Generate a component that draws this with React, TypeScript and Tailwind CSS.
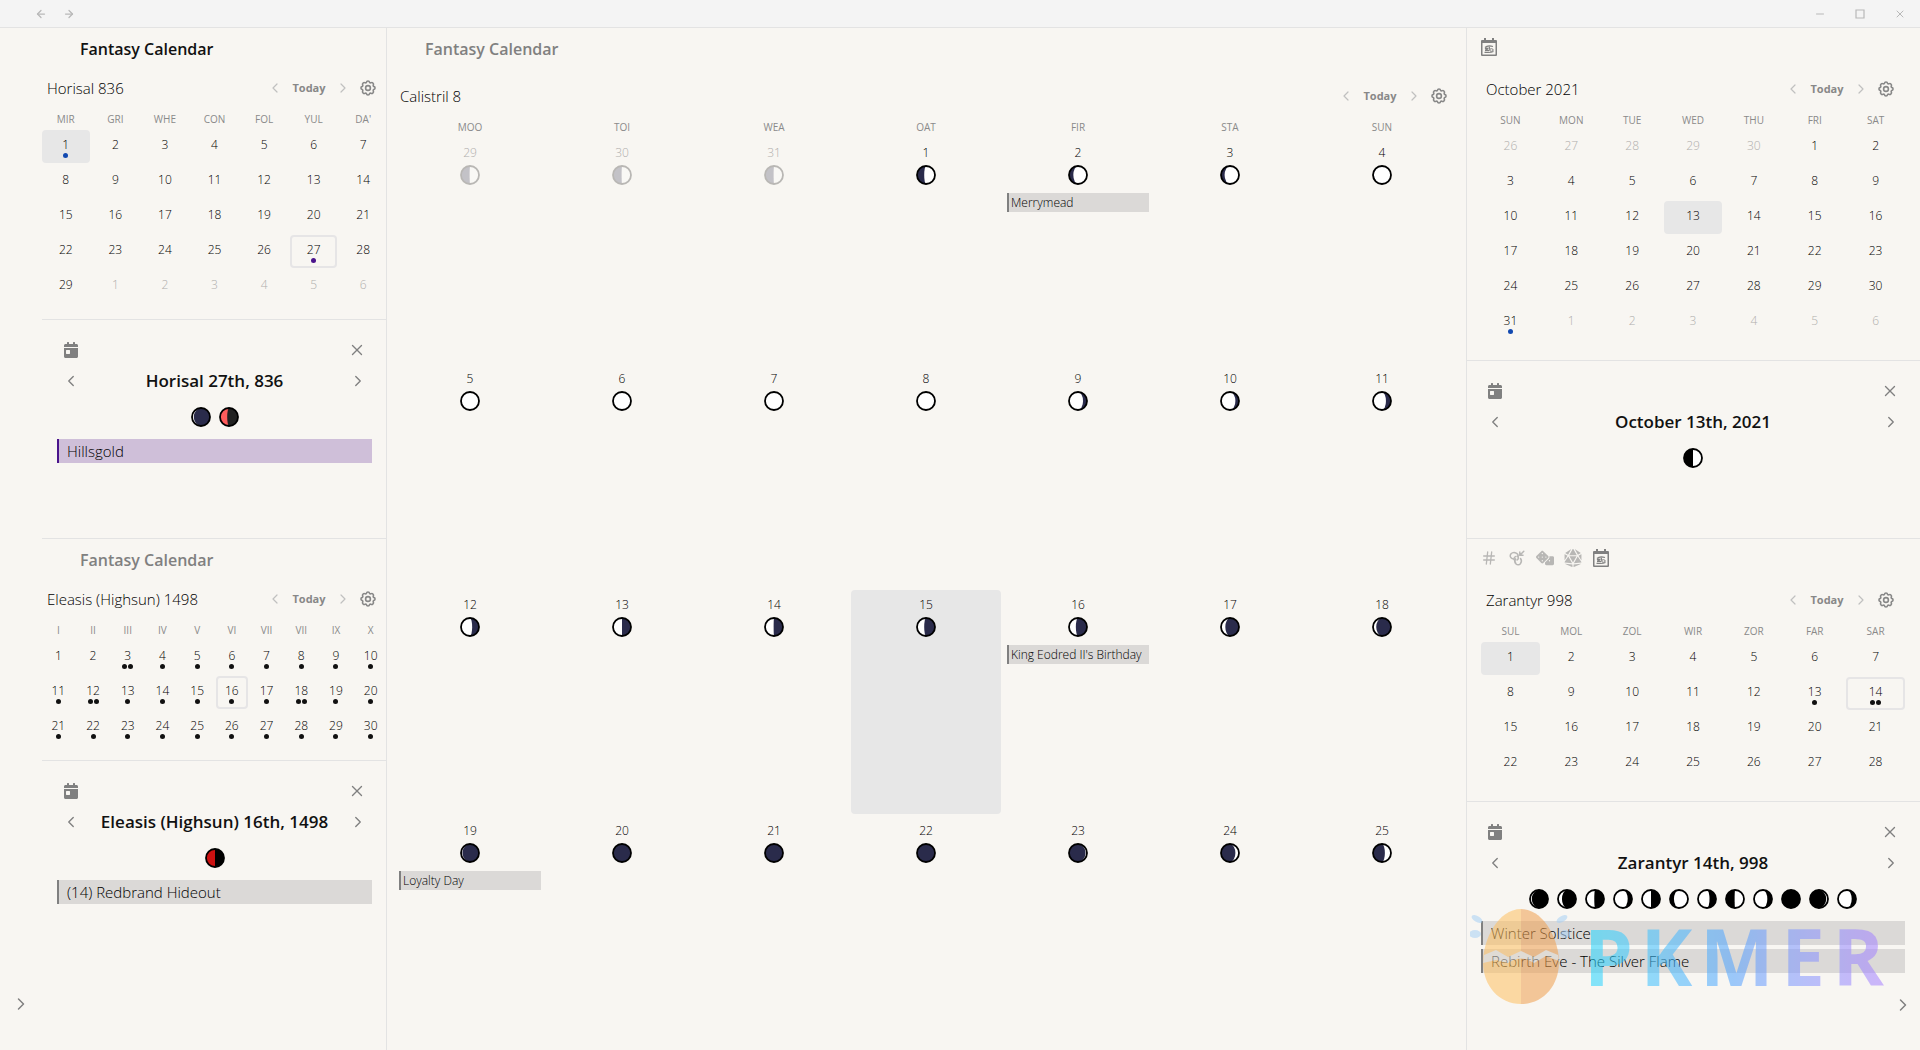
import { ArrowLeft, ArrowRight, ChevronLeft, ChevronRight, Hash, Minus, X } from 'lucide-react';
import { FaCalendarDay, FaDice, FaDiceD20 } from 'react-icons/fa';
import clsx from 'clsx';

type MoonPhase = {
    lit: 'left' | 'right';
    amount: number;
    dark?: string;
    light?: string;
};

type Day = {
    label: number;
    adjacent?: boolean;
    current?: boolean;
    selected?: boolean;
    dots?: string[];
    moon?: MoonPhase;
    event?: string;
};

type DayEvent = {
    name: string;
    tone?: 'gray' | 'purple';
};

const NIGHT = '#2a2b4b';
const INK = '#111111';
const BLUE = '#1249b0';
const PURPLE = '#4a148c';

function range(from: number, to: number): Day[] {
    return Array.from({ length: to - from + 1 }, (_, i) => ({ label: from + i }));
}

function adjacent(from: number, to: number): Day[] {
    return range(from, to).map((day) => ({ ...day, adjacent: true }));
}

function patch(days: Day[], changes: Record<number, Partial<Day>>): Day[] {
    return days.map((day) => (day.adjacent ? day : { ...day, ...changes[day.label] }));
}

const horisal = [
    ...patch(range(1, 29), {
        1: { current: true, dots: [BLUE] },
        27: { selected: true, dots: [PURPLE] },
    }),
    ...adjacent(1, 6),
];

const eleasis = range(1, 30).map((day) => ({
    ...day,
    selected: day.label === 16,
    dots: day.label < 3 ? [] : [3, 12, 18].includes(day.label) ? [INK, INK] : [INK],
}));

const october = [
    ...adjacent(26, 30),
    ...patch(range(1, 31), {
        13: { current: true },
        31: { dots: [BLUE] },
    }),
    ...adjacent(1, 6),
];

const zarantyr = patch(range(1, 28), {
    1: { current: true },
    13: { dots: [INK] },
    14: { selected: true, dots: [INK, INK] },
});

// Positive values are lit from the right, negative ones from the left.
const calistrilLight = [
    0.6, 0.76, 0.8, 0.95, 0.98, 1, 1, -0.97, -0.78, -0.8, -0.72, -0.62, -0.5, -0.48, -0.4, -0.38,
    -0.24, -0.18, -0.08, 0, 0, 0, 0.08, 0.2, 0.34,
];

const calistrilEvents: Record<number, string> = {
    2: 'Merrymead',
    16: "King Eodred II's Birthday",
    19: 'Loyalty Day',
};

const calistril: Day[] = [
    ...adjacent(29, 31).map((day) => ({
        ...day,
        moon: { lit: 'right' as const, amount: 0.52, dark: NIGHT },
    })),
    ...range(1, 25).map((day, i) => ({
        ...day,
        current: day.label === 15,
        event: calistrilEvents[day.label],
        moon: {
            lit: calistrilLight[i] < 0 ? ('left' as const) : ('right' as const),
            amount: Math.abs(calistrilLight[i]),
            dark: NIGHT,
        },
    })),
];

const zarantyrMoons: MoonPhase[] = [
    { lit: 'left', amount: 0.1 },
    { lit: 'left', amount: 0.22 },
    { lit: 'left', amount: 0.46 },
    { lit: 'left', amount: 0.76 },
    { lit: 'left', amount: 0.5 },
    { lit: 'right', amount: 0.78 },
    { lit: 'left', amount: 0.64 },
    { lit: 'right', amount: 0.52 },
    { lit: 'left', amount: 0.74 },
    { lit: 'left', amount: 0 },
    { lit: 'right', amount: 0.1 },
    { lit: 'left', amount: 0.76 },
];

function Moon({ lit, amount, dark = '#000000', light = '#ffffff' }: MoonPhase) {
    const rx = Math.abs(1 - 2 * amount) * 9;
    const outer = lit === 'left' ? 0 : 1;
    const inner = amount > 0.5 ? outer : 1 - outer;

    return (
        <svg viewBox="0 0 20 20" className="size-5" aria-hidden="true">
            <circle cx="10" cy="10" r="9" fill={dark} />
            <path
                d={`M10 1 A9 9 0 0 ${outer} 10 19 A${rx} 9 0 0 ${inner} 10 1Z`}
                fill={light}
            />
            <circle cx="10" cy="10" r="9" fill="none" stroke="#000000" strokeWidth="1.8" />
        </svg>
    );
}

function GearIcon() {
    return (
        <svg
            viewBox="0 0 24 24"
            className="size-4"
            fill="none"
            stroke="currentColor"
            strokeWidth="2.4"
            strokeLinejoin="round"
            aria-hidden="true"
        >
            <path d="M9.6 3.6Q10 1.4 12 1.4Q14 1.4 14.4 3.6Q15 4.4 16.2 4.2Q18 3 19.4 4.6Q21 6 19.8 7.8Q19.6 9 20.4 9.6Q22.6 10 22.6 12Q22.6 14 20.4 14.4Q19.6 15 19.8 16.2Q21 18 19.4 19.4Q18 21 16.2 19.8Q15 19.6 14.4 20.4Q14 22.6 12 22.6Q10 22.6 9.6 20.4Q9 19.6 7.8 19.8Q6 21 4.6 19.4Q3 18 4.2 16.2Q4.4 15 3.6 14.4Q1.4 14 1.4 12Q1.4 10 3.6 9.6Q4.4 9 4.2 7.8Q3 6 4.6 4.6Q6 3 7.8 4.2Q9 4.4 9.6 3.6Z" />
            <circle cx="12" cy="12" r="3.6" />
        </svg>
    );
}

function FantasyCalendarIcon() {
    return (
        <svg viewBox="0 0 16 18" className="h-[18px] w-4" aria-hidden="true">
            <path
                fill="currentColor"
                fillRule="evenodd"
                d="M3 0h2v2h6V0h2v2h2a1 1 0 0 1 1 1v14a1 1 0 0 1-1 1H1a1 1 0 0 1-1-1V3a1 1 0 0 1 1-1h2zM1.5 5v11.500h13V5z"
            />
            <path
                fill="none"
                stroke="currentColor"
                strokeWidth="1.2"
                d="M4 9.500c2-2 5-2 8-1M3.500 14.300c4 .4 7 .2 9-.8"
            />
            <ellipse cx="5.600" cy="10.800" rx="1.800" ry="1.200" fill="currentColor" />
            <ellipse cx="10.400" cy="12" rx="1.800" ry="1.300" fill="none" stroke="currentColor" />
            <path stroke="currentColor" strokeWidth="1.3" d="M8.300 8.500v3M4 12.700h4" />
        </svg>
    );
}

function BacklinksIcon() {
    return (
        <svg
            viewBox="0 0 16 16"
            className="size-4"
            fill="none"
            stroke="currentColor"
            strokeWidth="1.5"
            strokeLinecap="round"
            aria-hidden="true"
        >
            <path d="M9 6.800A4 3.200 0 1 0 4.800 9" />
            <path d="M7 6.500a2.400 2.400 0 0 0-1.500 3.800" />
            <path d="M6.500 8.800A3.200 3.800 0 1 0 11.500 8.500" />
            <path d="M8.500 6a2.400 2.400 0 0 1-.5 4" />
            <path d="M14.800 1.200l-4 4M10.800 2v3.200h3.200" />
        </svg>
    );
}

function EventBar({ name, tone = 'gray' }: DayEvent) {
    return (
        <button
            type="button"
            className={clsx(
                'h-6 w-full truncate border-l-2 pl-2 text-left text-[15px] leading-6 font-light text-black',
                tone === 'purple' ? 'border-[#4a148c] bg-[#cfbfd9]' : 'border-[#808080] bg-[#dbd9d7]',
            )}
        >
            {name}
        </button>
    );
}

function CalendarNav({ title, className }: { title: string; className?: string }) {
    return (
        <div className={clsx('flex h-6 items-center', className)}>
            <h3 className="flex-1 text-[15px] leading-6 font-light text-black">{title}</h3>
            <div className="flex items-center text-[#888888]">
                <button type="button" aria-label="Previous month" className="text-[#c0c0c0]">
                    <ChevronLeft className="size-4" strokeWidth={1.8} />
                </button>
                <button type="button" className="w-[52px] text-center text-[11px] font-bold">
                    Today
                </button>
                <button type="button" aria-label="Next month" className="text-[#c0c0c0]">
                    <ChevronRight className="size-4" strokeWidth={1.8} />
                </button>
                <button type="button" aria-label="Calendar settings" className="ml-[9px]">
                    <GearIcon />
                </button>
            </div>
        </div>
    );
}

function WeekdayRow({ names, columns }: { names: string[]; columns: string }) {
    return (
        <div className={clsx('grid h-[18px] gap-x-0.5', columns)}>
            {names.map((name, i) => (
                <span key={i} className="text-center text-[10px] leading-[18px] text-[#8a8a8a]">
                    {name}
                </span>
            ))}
        </div>
    );
}

function MonthGrid({ days, columns }: { days: Day[]; columns: string }) {
    return (
        <div className={clsx('grid gap-0.5', columns)}>
            {days.map((day, i) => (
                <button
                    key={i}
                    type="button"
                    className={clsx(
                        'flex h-[33px] flex-col items-center rounded border-2 pt-1 text-[12px] leading-[18px] font-light',
                        day.current && 'bg-[#e7e7e7]',
                        day.selected ? 'border-[#e6e5e6]' : 'border-transparent',
                        day.adjacent ? 'text-[#b0afad]' : 'text-black',
                    )}
                >
                    {day.label}
                    <span className="-mt-px flex gap-px">
                        {day.dots?.map((color, dot) => (
                            <span
                                key={dot}
                                className="size-[5px] rounded-full"
                                style={{ backgroundColor: color }}
                            />
                        ))}
                    </span>
                </button>
            ))}
        </div>
    );
}

interface DayViewProps {
    title: string;
    moons: MoonPhase[];
    events?: DayEvent[];
    className: string;
}

function DayView({ title, moons, events = [], className }: DayViewProps) {
    return (
        <section className={clsx('border-t border-[#e3e3e3] pt-[22px] text-[#808080]', className)}>
            <div className="flex h-4 items-center justify-between px-1.5">
                <button type="button" aria-label="Open note">
                    <FaCalendarDay className="size-4" />
                </button>
                <button type="button" aria-label="Close day">
                    <X className="size-[18px]" strokeWidth={1.8} />
                </button>
            </div>
            <div className="mt-[11px] flex h-6 items-center justify-between px-[5px]">
                <button type="button" aria-label="Previous day">
                    <ChevronLeft className="size-[18px]" strokeWidth={1.8} />
                </button>
                <h2 className="text-[17px] leading-6 font-semibold text-[#111111]">{title}</h2>
                <button type="button" aria-label="Next day">
                    <ChevronRight className="size-[18px]" strokeWidth={1.8} />
                </button>
            </div>
            <div className="mt-3.5 flex h-5 justify-center gap-2">
                {moons.map((moon, i) => (
                    <Moon key={i} {...moon} />
                ))}
            </div>
            <div className="mt-3 flex flex-col gap-1">
                {events.map((event) => (
                    <EventBar key={event.name} {...event} />
                ))}
            </div>
        </section>
    );
}

function TitleBar() {
    return (
        <header className="flex h-7 shrink-0 items-center justify-between border-b border-[#e3e3e3] bg-[#f4f4f4] pr-3.5 pl-[35px] text-[#b8b8b8]">
            <div className="flex items-center gap-4">
                <button type="button" aria-label="Back">
                    <ArrowLeft className="size-3" strokeWidth={2.5} />
                </button>
                <button type="button" aria-label="Forward">
                    <ArrowRight className="size-3" strokeWidth={2.5} />
                </button>
            </div>
            <div className="flex items-center gap-7">
                <button type="button" aria-label="Minimize">
                    <Minus className="size-3" strokeWidth={2} />
                </button>
                <button type="button" aria-label="Maximize">
                    <svg viewBox="0 0 12 12" className="size-3" aria-hidden="true">
                        <path
                            d="M2 2h8v8H2z"
                            fill="none"
                            stroke="currentColor"
                            strokeWidth="1.2"
                        />
                    </svg>
                </button>
                <button type="button" aria-label="Close">
                    <X className="size-3" strokeWidth={2} />
                </button>
            </div>
        </header>
    );
}

function CalistrilView() {
    return (
        <main className="flex min-w-0 flex-1 flex-col">
            <h1 className="h-[42px] pl-[38px] text-[16px] leading-[42px] font-semibold text-[#808080]">
                Fantasy Calendar
            </h1>
            <div className="flex flex-1 flex-col pt-[14px] pr-[9px] pb-2.5 pl-2">
                <CalendarNav title="Calistril 8" className="pr-2.5 pl-[5px]" />
                <div className="mt-[10px] mb-0.5">
                    <WeekdayRow
                        names={['MOO', 'TOI', 'WEA', 'OAT', 'FIR', 'STA', 'SUN']}
                        columns="grid-cols-7"
                    />
                </div>
                <div className="grid flex-1 auto-rows-fr grid-cols-7 gap-0.5">
                    {calistril.map((day, i) => (
                        <div
                            key={i}
                            className={clsx(
                                'flex min-w-0 flex-col items-center rounded px-1 pt-[6px] text-[12px] leading-[18px] font-light',
                                day.current && 'bg-[#e7e7e7]',
                                day.adjacent ? 'text-[#b0afad]' : 'text-black',
                            )}
                        >
                            <span>{day.label}</span>
                            <span className={clsx('mt-[3px]', day.adjacent && 'opacity-25')}>
                                {day.moon && <Moon {...day.moon} />}
                            </span>
                            {day.event && (
                                <button
                                    type="button"
                                    className="mt-2 h-[19px] w-full truncate border-l-2 border-[#808080] bg-[#dbd9d7] pl-0.5 text-left text-[12px] leading-5 text-black"
                                >
                                    {day.event}
                                </button>
                            )}
                        </div>
                    ))}
                </div>
            </div>
        </main>
    );
}

function LeftSidebar() {
    return (
        <aside className="flex w-[345px] shrink-0 flex-col border-r border-[#e3e3e3]">
            <section className="h-[510px]">
                <h1 className="h-[42px] pl-[38px] text-[16px] leading-[42px] font-semibold text-[#111111]">
                    Fantasy Calendar
                </h1>
                <div className="-mr-px pt-[6px] pb-4">
                    <CalendarNav title="Horisal 836" className="pr-[11px] pl-[5px]" />
                    <div className="mt-[10px] mb-0.5">
                        <WeekdayRow
                            names={['MIR', 'GRI', 'WHE', 'CON', 'FOL', 'YUL', "DA'"]}
                            columns="grid-cols-7"
                        />
                    </div>
                    <MonthGrid days={horisal} columns="grid-cols-7" />
                </div>
                <DayView
                    title="Horisal 27th, 836"
                    moons={[
                        { lit: 'left', amount: 0.1, dark: NIGHT },
                        { lit: 'left', amount: 0.4, dark: '#222222', light: '#ff5c5c' },
                    ]}
                    events={[{ name: 'Hillsgold', tone: 'purple' }]}
                    className="pr-3.5 pl-[15px]"
                />
            </section>
            <section className="border-t border-[#e3e3e3]">
                <h1 className="h-[42px] pl-[38px] text-[16px] leading-[42px] font-semibold text-[#808080]">
                    Fantasy Calendar
                </h1>
                <div className="-mr-px pt-[6px] pb-4">
                    <CalendarNav title="Eleasis (Highsun) 1498" className="pr-[11px] pl-[5px]" />
                    <div className="mt-[10px] mb-0.5">
                        <WeekdayRow
                            names={['I', 'II', 'III', 'IV', 'V', 'VI', 'VII', 'VII', 'IX', 'X']}
                            columns="grid-cols-10"
                        />
                    </div>
                    <MonthGrid days={eleasis} columns="grid-cols-10" />
                </div>
                <DayView
                    title="Eleasis (Highsun) 16th, 1498"
                    moons={[{ lit: 'left', amount: 0.5, light: '#cc1111' }]}
                    events={[{ name: '(14) Redbrand Hideout' }]}
                    className="pr-3.5 pl-[15px]"
                />
            </section>
        </aside>
    );
}

function RightSidebar() {
    return (
        <aside className="flex w-[454px] shrink-0 flex-col border-l border-[#e3e3e3]">
            <section className="h-[510px]">
                <div className="flex h-[42px] items-center px-3.5 pb-1 text-[#808080]">
                    <button type="button" aria-label="Fantasy Calendar">
                        <FantasyCalendarIcon />
                    </button>
                </div>
                <div className="pt-[7px] pr-[15px] pb-[21px] pl-3.5">
                    <CalendarNav title="October 2021" className="pr-[11px] pl-[5px]" />
                    <div className="mt-[10px] mb-0.5">
                        <WeekdayRow
                            names={['SUN', 'MON', 'TUE', 'WED', 'THU', 'FRI', 'SAT']}
                            columns="grid-cols-7"
                        />
                    </div>
                    <MonthGrid days={october} columns="grid-cols-7" />
                </div>
                <DayView
                    title="October 13th, 2021"
                    moons={[{ lit: 'right', amount: 0.5 }]}
                    className="pr-[15px] pl-3.5"
                />
            </section>
            <section className="border-t border-[#e3e3e3]">
                <div className="flex h-[42px] items-center gap-3 px-3.5 pb-1 text-[#b8b7b5]">
                    <button type="button" aria-label="Tags">
                        <Hash className="size-4" strokeWidth={2} />
                    </button>
                    <button type="button" aria-label="Backlinks">
                        <BacklinksIcon />
                    </button>
                    <button type="button" aria-label="Dice roller" className="flex w-4 justify-center">
                        <FaDice className="h-[18px] w-[18px] shrink-0" />
                    </button>
                    <button
                        type="button"
                        aria-label="Initiative tracker"
                        className="flex w-4 justify-center"
                    >
                        <FaDiceD20 className="h-[18px] w-[18px] shrink-0" />
                    </button>
                    <button type="button" aria-label="Fantasy Calendar" className="text-[#808080]">
                        <FantasyCalendarIcon />
                    </button>
                </div>
                <div className="pt-[7px] pr-[15px] pb-[21px] pl-3.5">
                    <CalendarNav title="Zarantyr 998" className="pr-[11px] pl-[5px]" />
                    <div className="mt-[10px] mb-0.5">
                        <WeekdayRow
                            names={['SUL', 'MOL', 'ZOL', 'WIR', 'ZOR', 'FAR', 'SAR']}
                            columns="grid-cols-7"
                        />
                    </div>
                    <MonthGrid days={zarantyr} columns="grid-cols-7" />
                </div>
                <DayView
                    title="Zarantyr 14th, 998"
                    moons={zarantyrMoons}
                    events={[{ name: 'Winter Solstice' }, { name: 'Rebirth Eve - The Silver Flame' }]}
                    className="pr-[15px] pl-3.5"
                />
            </section>
        </aside>
    );
}

function Watermark() {
    return (
        <div className="pointer-events-none absolute right-9 bottom-11 flex items-center gap-3.5 opacity-55">
            <svg viewBox="0 0 100 100" className="size-[100px]" aria-hidden="true">
                <path d="M51 3C74 3 89 34 89 56C89 80 73 98 51 98Z" fill="#f0a050" />
                <path d="M51 3C28 3 13 34 13 56C13 80 29 98 51 98Z" fill="#ffc061" />
                <path
                    d="M14 49L26 44L38 51L51 45L64 51L76 44L88 49L89 55L76 50L64 57Q51 48 38 57L26 54L13 57Z"
                    fill="#e3ddd5"
                />
                <g fill="#a8d0f5">
                    <ellipse cx="7" cy="13" rx="6" ry="3" transform="rotate(30 7 13)" />
                    <ellipse cx="5" cy="28" rx="6" ry="4" />
                    <ellipse cx="92" cy="13" rx="6" ry="3" transform="rotate(-30 92 13)" />
                    <ellipse cx="95" cy="28" rx="5" ry="4" />
                </g>
            </svg>
            <div className="flex h-20 w-[300px] justify-between bg-linear-to-r from-[#1ed9ff] via-[#50a2ff] to-[#a880ff] bg-clip-text text-[78px] leading-20 font-bold text-transparent">
                <span>P</span>
                <span>K</span>
                <span>M</span>
                <span>E</span>
                <span>R</span>
            </div>
        </div>
    );
}

export default function App() {
    return (
        <div className="relative flex min-h-screen flex-col overflow-hidden bg-[#f8f6f2] font-['Open_Sans','Noto_Sans',sans-serif]">
            <TitleBar />
            <div className="flex flex-1">
                <div className="flex w-[42px] shrink-0 flex-col justify-end pb-9 pl-[11px]">
                    <button type="button" aria-label="Expand ribbon" className="w-5 text-[#808080]">
                        <ChevronRight className="size-5" strokeWidth={1.8} />
                    </button>
                </div>
                <LeftSidebar />
                <CalistrilView />
                <RightSidebar />
            </div>
            <button
                type="button"
                aria-label="Collapse sidebar"
                className="absolute right-[7px] bottom-[35px] text-[#808080]"
            >
                <ChevronRight className="size-5" strokeWidth={1.8} />
            </button>
            <Watermark />
        </div>
    );
}
